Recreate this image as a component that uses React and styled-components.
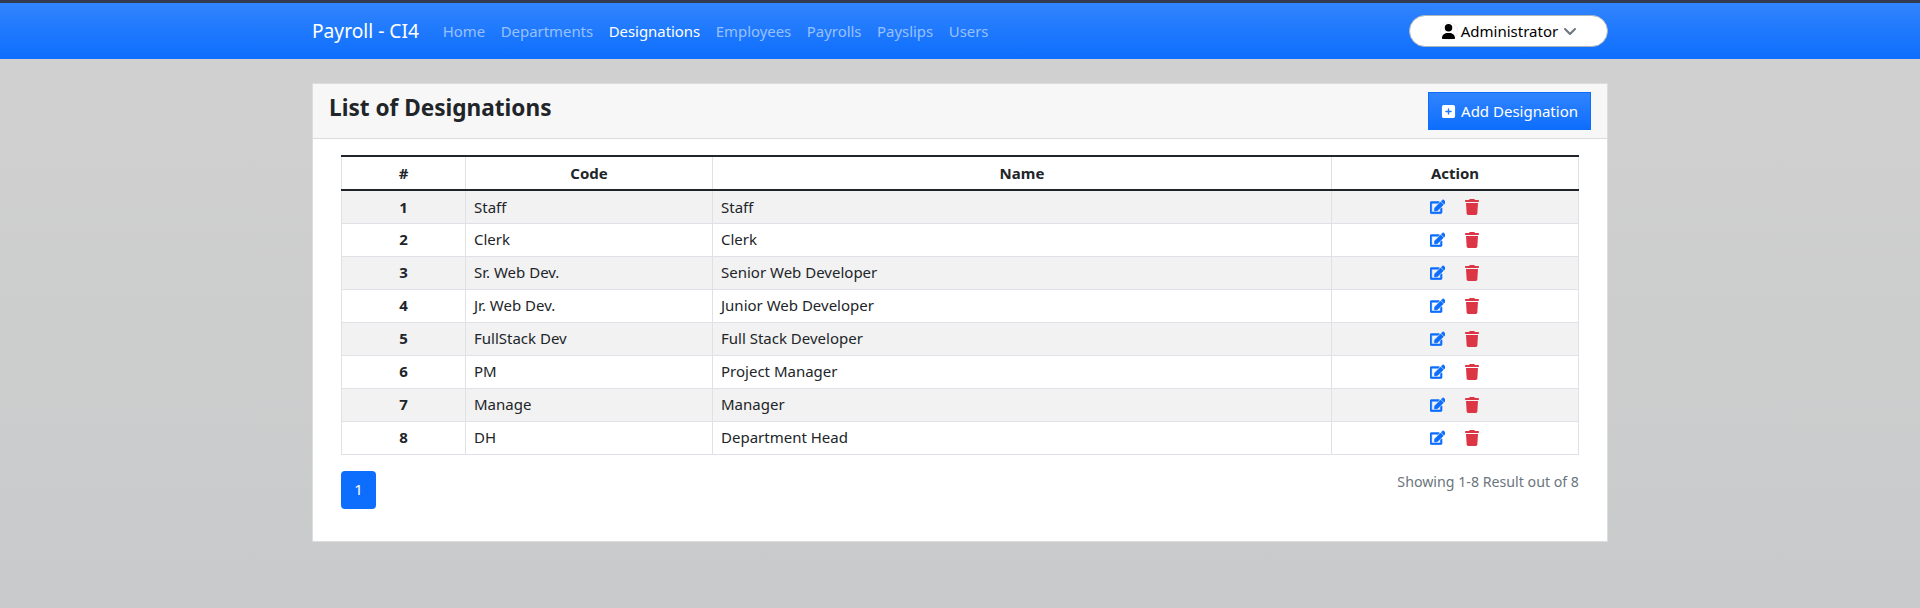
import React from 'react';
import styled, { createGlobalStyle } from 'styled-components';
import { FaEdit } from 'react-icons/fa';
import { FaTrash, FaUser, FaSquarePlus, FaAngleDown } from 'react-icons/fa6';

const GlobalStyle = createGlobalStyle`
  html, body {
    margin: 0;
    height: 100%;
  }
  body {
    min-height: 608px;
    background: linear-gradient(180deg, #d1d1d1, #c9cacb);
    color: #212529;
    font-family: "Noto Sans", "Open Sans", sans-serif;
    font-size: 15px;
    line-height: 1.5;
  }
`;

const Nav = styled.nav`
  height: 56px;
  border-top: 3px solid #343a50;
  background: linear-gradient(180deg, #3184fd, #0d6efd);
`;

const Container = styled.div`
  width: 1296px;
  margin: 0 auto;
`;

const NavInner = styled(Container)`
  display: flex;
  align-items: center;
  height: 100%;
`;

const Brand = styled.a`
  color: #fff;
  font-size: 19.2px;
  margin-right: 16px;
`;

const NavLink = styled.a`
  color: ${p => (p.$active ? '#fff' : 'rgba(255, 255, 255, 0.55)')};
  font-size: 14.9px;
  padding: 0 7.8px;
`;

const UserButton = styled.button`
  display: flex;
  align-items: center;
  justify-content: center;
  gap: 4px;
  width: 199px;
  height: 32px;
  margin-left: auto;
  padding: 0 0 0 2px;
  background: #fff;
  border: 1px solid #adb5bd;
  border-radius: 16px;
  font: inherit;
  color: #000;
`;

const UserIcon = styled.span`
  display: flex;
  align-items: center;
  justify-content: center;
  width: 16px;
  height: 16px;
  border-radius: 50%;
  font-size: 15px;
  box-shadow: 0 0 0 1px #efefef;
`;

const Chevron = styled(FaAngleDown)`
  color: #6c757d;
  font-size: 16px;
`;

const Card = styled(Container)`
  margin-top: 24px;
  height: 459px;
  box-sizing: border-box;
  background: #fff;
  border: 1px solid #dcdcdc;
`;

const CardHeader = styled.div`
  display: flex;
  justify-content: space-between;
  height: 55px;
  box-sizing: border-box;
  padding: 8px 16px;
  background: #f7f7f7;
  border-bottom: 1px solid #dcdcdc;
`;

const Title = styled.h4`
  margin: 1px 0 0;
  font-size: 22.6px;
  font-weight: 700;
  line-height: 1.3;
`;

const AddButton = styled.button`
  display: flex;
  align-items: center;
  gap: 5px;
  height: 38px;
  padding: 0 12px;
  border: 1px solid #0d6efd;
  background: linear-gradient(180deg, #3184fd, #0d6efd);
  color: #fff;
  font: inherit;
`;

const CardBody = styled.div`
  padding: 16px 28px 0 28px;
`;

const Table = styled.table`
  width: 1237px;
  table-layout: fixed;
  border-collapse: collapse;
`;

const HeadCell = styled.th`
  box-sizing: border-box;
  height: 34px;
  padding: 0;
  text-align: center;
  font-weight: 700;
  border: 1px solid #dee2e6;
  border-top: 2px solid #212529;
  border-bottom: 2px solid #212529;
  width: ${p => p.$width};
`;

const Row = styled.tr`
  background: ${p => (p.$striped ? '#f2f2f2' : '#fff')};
`;

const Cell = styled.td`
  box-sizing: border-box;
  height: 33px;
  padding: 0 8px;
  border: 1px solid #dee2e6;
  text-align: ${p => (p.$center ? 'center' : 'left')};
  font-weight: ${p => (p.$bold ? 700 : 400)};
`;

const Actions = styled.div`
  display: flex;
  justify-content: center;
  align-items: center;
  gap: 19px;
`;

const EditIcon = styled(FaEdit)`
  color: #0d6efd;
  font-size: 15.5px;
  stroke: currentColor;
  stroke-width: 20;
`;

const TrashIcon = styled(FaTrash)`
  color: #dc3545;
  font-size: 16px;
`;

const Footer = styled.div`
  display: flex;
  justify-content: space-between;
  margin-top: 16px;
`;

const PageButton = styled.span`
  display: flex;
  align-items: center;
  justify-content: center;
  width: 35px;
  height: 38px;
  border-radius: 4px;
  background: #0d6efd;
  color: #fff;
`;

const ResultText = styled.span`
  color: #6c757d;
  font-size: 14.2px;
`;

const links = ['Home', 'Departments', 'Designations', 'Employees', 'Payrolls', 'Payslips', 'Users'];

const designations = [
  ['Staff', 'Staff'],
  ['Clerk', 'Clerk'],
  ['Sr. Web Dev.', 'Senior Web Developer'],
  ['Jr. Web Dev.', 'Junior Web Developer'],
  ['FullStack Dev', 'Full Stack Developer'],
  ['PM', 'Project Manager'],
  ['Manage', 'Manager'],
  ['DH', 'Department Head'],
];

export default function App() {
  return (
    <>
      <GlobalStyle />
      <Nav>
        <NavInner>
          <Brand>Payroll - CI4</Brand>
          {links.map(link => (
            <NavLink key={link} $active={link === 'Designations'}>
              {link}
            </NavLink>
          ))}
          <UserButton>
            <UserIcon><FaUser /></UserIcon>
            Administrator
            <Chevron />
          </UserButton>
        </NavInner>
      </Nav>
      <Card>
        <CardHeader>
          <Title>List of Designations</Title>
          <AddButton>
            <FaSquarePlus />
            Add Designation
          </AddButton>
        </CardHeader>
        <CardBody>
          <Table>
            <thead>
              <tr>
                <HeadCell $width="124px">#</HeadCell>
                <HeadCell $width="247px">Code</HeadCell>
                <HeadCell $width="619px">Name</HeadCell>
                <HeadCell $width="247px">Action</HeadCell>
              </tr>
            </thead>
            <tbody>
              {designations.map(([code, name], i) => (
                <Row key={code} $striped={i % 2 === 0}>
                  <Cell $center $bold>{i + 1}</Cell>
                  <Cell>{code}</Cell>
                  <Cell>{name}</Cell>
                  <Cell>
                    <Actions>
                      <EditIcon />
                      <TrashIcon />
                    </Actions>
                  </Cell>
                </Row>
              ))}
            </tbody>
          </Table>
          <Footer>
            <PageButton>1</PageButton>
            <ResultText>Showing 1-8 Result out of 8</ResultText>
          </Footer>
        </CardBody>
      </Card>
    </>
  );
}
